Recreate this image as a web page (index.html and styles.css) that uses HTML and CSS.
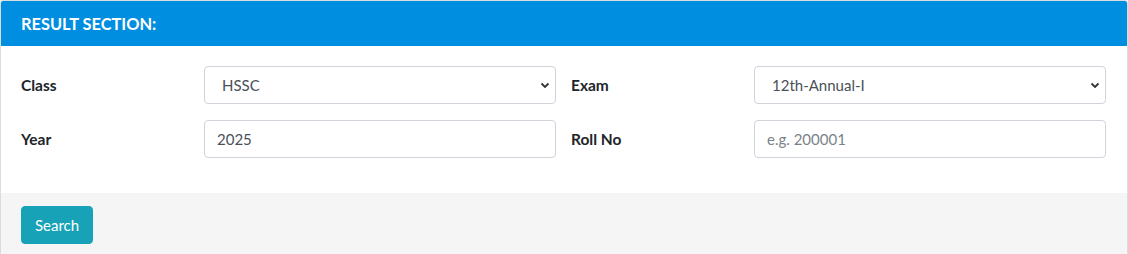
FILE: index.html
```html
<!DOCTYPE html>
<html>
<head>
    <meta charset="utf-8">
    <title>Result Section</title>
    <link rel="stylesheet" href="styles.css">
</head>
<body>
    <div class="card">
        <div class="card-header">RESULT SECTION:</div>

        <div class="card-body">
            <div class="form-grid">
                <label class="label" for="class">Class</label>
                <select id="class" class="field">
                    <option>HSSC</option>
                </select>
                <label class="label label-right" for="exam">Exam</label>
                <select id="exam" class="field">
                    <option>12th-Annual-I</option>
                </select>

                <label class="label" for="year">Year</label>
                <input id="year" class="field" type="text" value="2025">
                <label class="label label-right" for="roll">Roll No</label>
                <input id="roll" class="field" type="text" placeholder="e.g. 200001">
            </div>
        </div>

        <div class="card-footer">
            <button class="btn-search">Search</button>
        </div>
    </div>
</body>
</html>
```

FILE: styles.css
```css
body {
    margin: 0;
    background-color: #ffffff;
    font-family: Lato, 'Noto Sans', sans-serif;
    color: #212529;
}

.card {
    border: 1px solid #dadde0;
    border-radius: 3px;
    overflow: hidden;
    height: 260px;
    display: flex;
    flex-direction: column;
}

.card-header {
    background-color: #008ee0;
    color: #ffffff;
    font-weight: 700;
    font-size: 16.4px;
    padding: 0 20px;
    height: 45px;
    line-height: 45px;
}

.card-body {
    padding: 20px 20px 35px 20px;
}

.form-grid {
    display: grid;
    grid-template-columns: 183px 352px 198px 352px;
    row-gap: 16px;
    align-items: center;
}

.label {
    font-weight: 700;
    font-size: 15.5px;
}

.label-right {
    padding-left: 15px;
}

.field {
    box-sizing: border-box;
    height: 38px;
    width: 100%;
    border: 1px solid #ced4da;
    border-radius: 4px;
    background-color: #ffffff;
    font-family: Lato, 'Noto Sans', sans-serif;
    font-size: 15px;
    color: #495057;
    padding: 0 12px;
    outline: none;
}

select.field {
    appearance: none;
    -webkit-appearance: none;
    padding-left: 17px;
    background-image: url("data:image/svg+xml,%3Csvg xmlns='http://www.w3.org/2000/svg' width='10' height='7' viewBox='0 0 10 7'%3E%3Cpath d='M1.5 1.5 L5 5 L8.5 1.5' fill='none' stroke='%23333' stroke-width='1.8'/%3E%3C/svg%3E");
    background-repeat: no-repeat;
    background-position: right 5px center;
}

.field::placeholder {
    color: #7b838a;
}

.card-footer {
    flex: 1;
    background-color: #f5f5f5;
    padding: 13px 20px 12px 20px;
}

.btn-search {
    height: 38px;
    padding: 0 13px;
    border: 1px solid #17a2b8;
    border-radius: 4px;
    background-color: #17a2b8;
    color: #ffffff;
    font-family: Lato, 'Noto Sans', sans-serif;
    font-size: 15px;
    cursor: pointer;
}
```
